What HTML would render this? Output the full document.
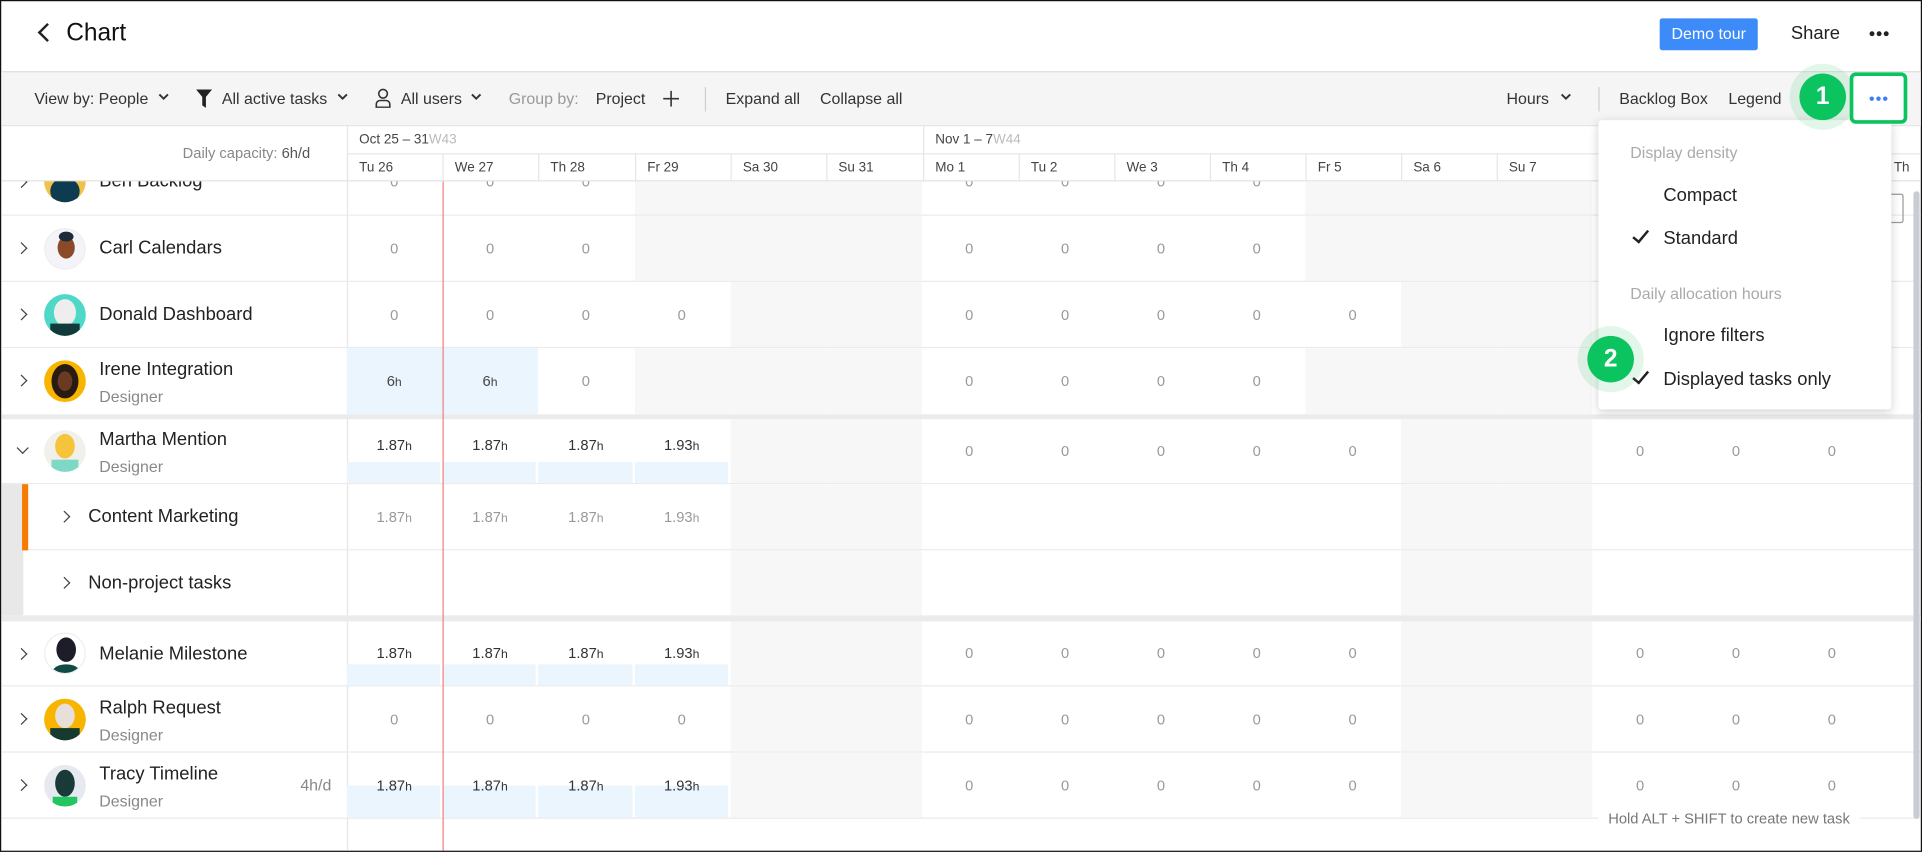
<!DOCTYPE html>
<html><head><meta charset="utf-8"><style>
*{box-sizing:border-box;margin:0;padding:0}
html,body{width:1922px;height:852px;overflow:hidden;background:#fff}
#w{position:absolute;left:0;top:0;width:1568px;height:695px;transform:scale(1.22577);transform-origin:0 0;font-family:"Liberation Sans",sans-serif;color:#222;border:1px solid #111;overflow:hidden;background:#fff}
.a{position:absolute}
.tb{font-size:13px;color:#333;top:72px;white-space:nowrap}
.cv{position:absolute;top:75px}
.row{position:absolute;left:0;width:1568px;border-bottom:1px solid #ebebeb}
.cells{position:absolute;left:282px;top:0;bottom:0;display:flex}
.cells div{width:78.2px;flex:none;height:100%;display:flex;align-items:center;justify-content:center;font-size:12px;color:#999;position:relative;border-right:1px solid transparent}
.cells .g{background:#f7f7f7}
.cells .b{background:#eaf5fe;color:#444}
.cells .h{color:#333}
.cells .s{color:#999}
.cells .br::after{content:"";position:absolute;left:0;right:1px;bottom:0;height:17px;background:#eaf5fe;z-index:0}
.cells .bt::after{height:26px}
.cells span{position:relative;z-index:1}
.cells .m{margin-top:-10px}
small{font-size:10px}
.nm{position:absolute;left:80px;font-size:15px;color:#222;white-space:nowrap}
.sub{position:absolute;left:80px;font-size:13px;color:#888}
.chev{position:absolute;left:13px;width:7px;height:7px;border-right:1.3px solid #444;border-top:1.3px solid #444;transform:rotate(45deg)}
.av{position:absolute;left:35px;width:34px;height:34px;border-radius:50%;overflow:hidden}
.day{position:absolute;top:125px;height:22px;font-size:11px;color:#444;padding:5px 0 0 9px;border-left:1px solid #e6e6e6}
.mi{position:absolute;left:1356px;font-size:15px;color:#222}
.mh{position:absolute;left:1329px;font-size:13px;color:#aaa}
.ck{position:absolute;left:1334px;width:7px;height:13px;border-right:2px solid #222;border-bottom:2px solid #222;transform:rotate(40deg)}
</style></head><body><div id="w">
<!-- header -->
<div class="a" style="left:32px;top:20px;width:11px;height:11px;border-left:2px solid #222;border-bottom:2px solid #222;transform:rotate(45deg)"></div>
<div class="a" style="left:53px;top:15px;font-size:20px;color:#111">Chart</div>
<div class="a" style="left:1353px;top:14px;width:80px;height:26px;background:#3d8bf8;border-radius:2px;color:#fff;font-size:13px;text-align:center;line-height:26px">Demo tour</div>
<div class="a" style="left:1460px;top:18px;font-size:15px;color:#222">Share</div>
<svg class="a" style="left:1524px;top:24px" width="16" height="5" viewBox="0 0 16 5"><circle cx="2.2" cy="2.5" r="2" fill="#222"/><circle cx="8" cy="2.5" r="2" fill="#222"/><circle cx="13.8" cy="2.5" r="2" fill="#222"/></svg>
<!-- toolbar -->
<div class="a" style="left:0;top:57px;width:1568px;height:45px;background:#f5f5f5;border-top:1px solid #e0e0e0;border-bottom:1px solid #e6e6e6"></div>
<div class="a tb" style="left:27px">View by: People</div>
<svg class="cv" style="left:128px" width="9" height="6" viewBox="0 0 9 6"><path d="M1 1l3.5 3.5L8 1" fill="none" stroke="#333" stroke-width="1.6"/></svg>
<svg class="a" style="left:159px;top:72px" width="13" height="15" viewBox="0 0 13 15"><path d="M0 0H13L8 6V15L5 13V6Z" fill="#222"/></svg>
<div class="a tb" style="left:180px">All active tasks</div>
<svg class="cv" style="left:274px" width="9" height="6" viewBox="0 0 9 6"><path d="M1 1l3.5 3.5L8 1" fill="none" stroke="#333" stroke-width="1.6"/></svg>
<svg class="a" style="left:305px;top:71px" width="13" height="16" viewBox="0 0 13 16"><circle cx="6.5" cy="4.5" r="3.5" fill="none" stroke="#333" stroke-width="1.3"/><path d="M1 15.5V13a3 3 0 0 1 3-3h5a3 3 0 0 1 3 3v2.5Z" fill="none" stroke="#333" stroke-width="1.3"/></svg>
<div class="a tb" style="left:326px">All users</div>
<svg class="cv" style="left:383px" width="9" height="6" viewBox="0 0 9 6"><path d="M1 1l3.5 3.5L8 1" fill="none" stroke="#333" stroke-width="1.6"/></svg>
<div class="a tb" style="left:414px;color:#999">Group by:</div>
<div class="a tb" style="left:485px">Project</div>
<svg class="a" style="left:540px;top:73px" width="13" height="13" viewBox="0 0 13 13"><path d="M6.5 0V13M0 6.5H13" stroke="#333" stroke-width="1.3"/></svg>
<div class="a" style="left:574px;top:70px;width:1px;height:20px;background:#d0d0d0"></div>
<div class="a tb" style="left:591px">Expand all</div>
<div class="a tb" style="left:668px">Collapse all</div>
<div class="a tb" style="left:1228px">Hours</div>
<svg class="cv" style="left:1272px" width="9" height="6" viewBox="0 0 9 6"><path d="M1 1l3.5 3.5L8 1" fill="none" stroke="#333" stroke-width="1.6"/></svg>
<div class="a" style="left:1303px;top:70px;width:1px;height:20px;background:#d0d0d0"></div>
<div class="a tb" style="left:1320px">Backlog Box</div>
<div class="a tb" style="left:1409px">Legend</div>
<!-- timeline header -->
<div class="a" style="left:0;top:102px;width:1568px;height:45px;border-bottom:1px solid #e3e3e3"></div>
<div class="a" style="left:282px;top:102px;width:1px;height:593px;background:#e6e6e6"></div>
<div class="a" style="left:148px;top:117px;font-size:12px;color:#888">Daily capacity: <span style="color:#555">6h/d</span></div>
<div class="a" style="left:292px;top:107px;font-size:11px;color:#444">Oct 25 – 31<span style="color:#bbb">W43</span></div>
<div class="a" style="left:752px;top:102px;width:1px;height:23px;background:#e6e6e6"></div>
<div class="a" style="left:762px;top:107px;font-size:11px;color:#444">Nov 1 – 7<span style="color:#bbb">W44</span></div>
<div class="a" style="left:282px;top:124px;width:1286px;height:1px;background:#e6e6e6"></div>
<div class="day" style="left:282px;width:78px">Tu 26</div>
<div class="day" style="left:360px;width:78px">We 27</div>
<div class="day" style="left:438px;width:79px">Th 28</div>
<div class="day" style="left:517px;width:78px">Fr 29</div>
<div class="day" style="left:595px;width:78px">Sa 30</div>
<div class="day" style="left:673px;width:79px">Su 31</div>
<div class="day" style="left:752px;width:78px">Mo 1</div>
<div class="day" style="left:830px;width:78px">Tu 2</div>
<div class="day" style="left:908px;width:78px">We 3</div>
<div class="day" style="left:986px;width:78px">Th 4</div>
<div class="day" style="left:1064px;width:78px">Fr 5</div>
<div class="day" style="left:1142px;width:78px">Sa 6</div>
<div class="day" style="left:1220px;width:79px">Su 7</div>
<div class="day" style="left:1534px;width:40px">Th</div>
<!-- body -->
<div class="a" style="left:0;top:147px;width:1568px;height:548px;overflow:hidden">
<div class="row" style="top:-27px;height:55px"><div class="av" style="top:10px;background:#f0c24a"><div class="a" style="left:5px;top:14px;width:24px;height:22px;border-radius:50%;background:#0d3b4f"></div></div><div class="nm" style="top:18px">Ben Backlog</div><div class="chev" style="top:24px"></div>
<div class="cells"><div><span>0</span></div><div><span>0</span></div><div><span>0</span></div><div class="g"></div><div class="g"></div><div class="g"></div><div><span>0</span></div><div><span>0</span></div><div><span>0</span></div><div><span>0</span></div><div class="g"></div><div class="g"></div><div class="g"></div><div></div><div></div><div></div><div></div></div></div>
<div class="row" style="top:28px;height:54px"><div class="chev" style="top:23px"></div><div class="av" style="top:10px;background:#f4f4f8;border:1px solid #eee"><div class="a" style="left:10px;top:6px;width:14px;height:18px;border-radius:50%;background:#8a4a2a"></div><div class="a" style="left:11px;top:2px;width:12px;height:8px;border-radius:50%;background:#1b2b3a"></div></div><div class="nm" style="top:18px">Carl Calendars</div>
<div class="cells"><div><span>0</span></div><div><span>0</span></div><div><span>0</span></div><div class="g"></div><div class="g"></div><div class="g"></div><div><span>0</span></div><div><span>0</span></div><div><span>0</span></div><div><span>0</span></div><div class="g"></div><div class="g"></div><div class="g"></div><div></div><div></div><div></div><div></div></div></div>
<div class="row" style="top:82px;height:54px"><div class="chev" style="top:23px"></div><div class="av" style="top:10px;background:#4dd8c8"><div class="a" style="left:8px;top:4px;width:18px;height:22px;border-radius:50%;background:#eee"></div><div class="a" style="left:5px;top:24px;width:24px;height:14px;background:#133a3a"></div></div><div class="nm" style="top:18px">Donald Dashboard</div>
<div class="cells"><div><span>0</span></div><div><span>0</span></div><div><span>0</span></div><div><span>0</span></div><div class="g"></div><div class="g"></div><div><span>0</span></div><div><span>0</span></div><div><span>0</span></div><div><span>0</span></div><div><span>0</span></div><div class="g"></div><div class="g"></div><div></div><div></div><div></div><div></div></div></div>
<div class="row" style="top:136px;height:58px;border-bottom:4px solid #ebebeb"><div class="chev" style="top:23px"></div><div class="av" style="top:10px;background:#f7b500"><div class="a" style="left:6px;top:3px;width:22px;height:28px;border-radius:50%;background:#2a1a14"></div><div class="a" style="left:11px;top:9px;width:12px;height:16px;border-radius:50%;background:#6b3a22"></div></div><div class="nm" style="top:9px">Irene Integration</div><div class="sub" style="top:32px">Designer</div>
<div class="cells" style="bottom:0"><div class="b"><span>6<small>h</small></span></div><div class="b"><span>6<small>h</small></span></div><div><span>0</span></div><div class="g"></div><div class="g"></div><div class="g"></div><div><span>0</span></div><div><span>0</span></div><div><span>0</span></div><div><span>0</span></div><div class="g"></div><div class="g"></div><div class="g"></div><div></div><div></div><div></div><div></div></div></div>
<div class="row" style="top:194px;height:53px"><div class="chev" style="top:20px;transform:rotate(135deg);left:14px"></div><div class="av" style="top:9px;background:#f2f0ea"><div class="a" style="left:9px;top:3px;width:16px;height:20px;border-radius:50%;background:#f5c43a"></div><div class="a" style="left:6px;top:24px;width:22px;height:12px;background:#7fd8c6"></div></div><div class="nm" style="top:8px">Martha Mention</div><div class="sub" style="top:31px">Designer</div>
<div class="cells"><div class="br h"><span class="m">1.87<small>h</small></span></div><div class="br h"><span class="m">1.87<small>h</small></span></div><div class="br h"><span class="m">1.87<small>h</small></span></div><div class="br h"><span class="m">1.93<small>h</small></span></div><div class="g"></div><div class="g"></div><div><span>0</span></div><div><span>0</span></div><div><span>0</span></div><div><span>0</span></div><div><span>0</span></div><div class="g"></div><div class="g"></div><div><span>0</span></div><div><span>0</span></div><div><span>0</span></div><div></div></div></div>
<div class="row" style="top:247px;height:54px"><div class="a" style="left:0;top:0;width:18px;height:107px;background:#e8e8e8"></div><div class="a" style="left:17px;top:0;width:5px;height:54px;background:#f57c00"></div><div class="chev" style="top:23px;left:48px"></div><div class="nm" style="left:71px;top:18px">Content Marketing</div>
<div class="cells"><div class="s"><span>1.87<small>h</small></span></div><div class="s"><span>1.87<small>h</small></span></div><div class="s"><span>1.87<small>h</small></span></div><div class="s"><span>1.93<small>h</small></span></div><div class="g"></div><div class="g"></div><div></div><div></div><div></div><div></div><div></div><div class="g"></div><div class="g"></div><div></div><div></div><div></div><div></div></div></div>
<div class="row" style="top:301px;height:58px;border-bottom:5px solid #ebebeb"><div class="chev" style="top:23px;left:48px"></div><div class="nm" style="left:71px;top:18px">Non-project tasks</div>
<div class="cells"><div></div><div></div><div></div><div></div><div class="g"></div><div class="g"></div><div></div><div></div><div></div><div></div><div></div><div class="g"></div><div class="g"></div><div></div><div></div><div></div><div></div></div></div>
<div class="row" style="top:359px;height:53px"><div class="chev" style="top:23px"></div><div class="av" style="top:9px;background:#fff;border:1px solid #eee"><div class="a" style="left:9px;top:3px;width:16px;height:20px;border-radius:50%;background:#1d1d2a"></div><div class="a" style="left:6px;top:25px;width:22px;height:12px;border-radius:50%;background:#0f4a44"></div></div><div class="nm" style="top:18px">Melanie Milestone</div>
<div class="cells"><div class="br h"><span>1.87<small>h</small></span></div><div class="br h"><span>1.87<small>h</small></span></div><div class="br h"><span>1.87<small>h</small></span></div><div class="br h"><span>1.93<small>h</small></span></div><div class="g"></div><div class="g"></div><div><span>0</span></div><div><span>0</span></div><div><span>0</span></div><div><span>0</span></div><div><span>0</span></div><div class="g"></div><div class="g"></div><div><span>0</span></div><div><span>0</span></div><div><span>0</span></div><div></div></div></div>
<div class="row" style="top:412px;height:54px"><div class="chev" style="top:23px"></div><div class="av" style="top:10px;background:#f7b500"><div class="a" style="left:9px;top:4px;width:16px;height:20px;border-radius:50%;background:#e8e0d8"></div><div class="a" style="left:5px;top:24px;width:24px;height:12px;background:#163a30"></div></div><div class="nm" style="top:9px">Ralph Request</div><div class="sub" style="top:32px">Designer</div>
<div class="cells"><div><span>0</span></div><div><span>0</span></div><div><span>0</span></div><div><span>0</span></div><div class="g"></div><div class="g"></div><div><span>0</span></div><div><span>0</span></div><div><span>0</span></div><div><span>0</span></div><div><span>0</span></div><div class="g"></div><div class="g"></div><div><span>0</span></div><div><span>0</span></div><div><span>0</span></div><div></div></div></div>
<div class="row" style="top:466px;height:54px"><div class="chev" style="top:23px"></div><div class="av" style="top:10px;background:#e6eaf0"><div class="a" style="left:9px;top:4px;width:16px;height:22px;border-radius:50%;background:#1a3a3a"></div><div class="a" style="left:7px;top:26px;width:20px;height:10px;background:#22c55e"></div></div><div class="nm" style="top:9px">Tracy Timeline</div><div class="sub" style="top:32px">Designer</div><div class="a" style="left:244px;top:19px;font-size:13px;color:#888">4h/d</div>
<div class="cells"><div class="br bt h"><span>1.87<small>h</small></span></div><div class="br bt h"><span>1.87<small>h</small></span></div><div class="br bt h"><span>1.87<small>h</small></span></div><div class="br bt h"><span>1.93<small>h</small></span></div><div class="g"></div><div class="g"></div><div><span>0</span></div><div><span>0</span></div><div><span>0</span></div><div><span>0</span></div><div><span>0</span></div><div class="g"></div><div class="g"></div><div><span>0</span></div><div><span>0</span></div><div><span>0</span></div><div></div></div></div>
</div>
<!-- today line -->
<div class="a" style="left:360px;top:147px;width:1px;height:548px;background:#f08080"></div>
<!-- hint -->
<div class="a" style="left:1303px;top:660px;padding:0 8px;background:#fff;font-size:12px;color:#777">Hold ALT + SHIFT to create new task</div>
<!-- scrollbar -->
<div class="a" style="left:1560px;top:155px;width:5px;height:512px;background:#c8ccd3;border-radius:3px"></div>
<div class="a" style="left:1540px;top:157px;width:12px;height:24px;border:1px solid #999;border-radius:2px"></div>
<!-- menu -->
<div class="a" style="left:1303px;top:97px;width:239px;height:236px;background:#fff;border-radius:3px;box-shadow:0 2px 8px rgba(0,0,0,.18)"></div>
<div class="mh" style="top:116px">Display density</div>
<div class="mi" style="top:150px">Compact</div>
<div class="ck" style="top:184px"></div><div class="mi" style="top:185px">Standard</div>
<div class="mh" style="top:231px">Daily allocation hours</div>
<div class="mi" style="top:264px">Ignore filters</div>
<div class="ck" style="top:299px"></div><div class="mi" style="top:300px">Displayed tasks only</div>
<!-- badges -->
<div class="a" style="left:1459px;top:51px;width:54px;height:54px;border-radius:50%;background:rgba(34,197,94,.13)"></div>
<div class="a" style="left:1467px;top:59px;width:38px;height:38px;border-radius:50%;background:#0cc45f;color:#fff;font-size:20px;font-weight:bold;text-align:center;line-height:38px">1</div>
<div class="a" style="left:1286px;top:265px;width:54px;height:54px;border-radius:50%;background:rgba(34,197,94,.13)"></div>
<div class="a" style="left:1294px;top:273px;width:38px;height:38px;border-radius:50%;background:#0cc45f;color:#fff;font-size:20px;font-weight:bold;text-align:center;line-height:38px">2</div>
<div class="a" style="left:1508px;top:58px;width:47px;height:42px;border:3.5px solid #0cc45f;border-radius:5px;background:#fff"></div>
<svg class="a" style="left:1524px;top:77px" width="15" height="5" viewBox="0 0 15 5"><circle cx="2" cy="2.5" r="1.8" fill="#3d7ef0"/><circle cx="7.5" cy="2.5" r="1.8" fill="#3d7ef0"/><circle cx="13" cy="2.5" r="1.8" fill="#3d7ef0"/></svg>
</div></body></html>
